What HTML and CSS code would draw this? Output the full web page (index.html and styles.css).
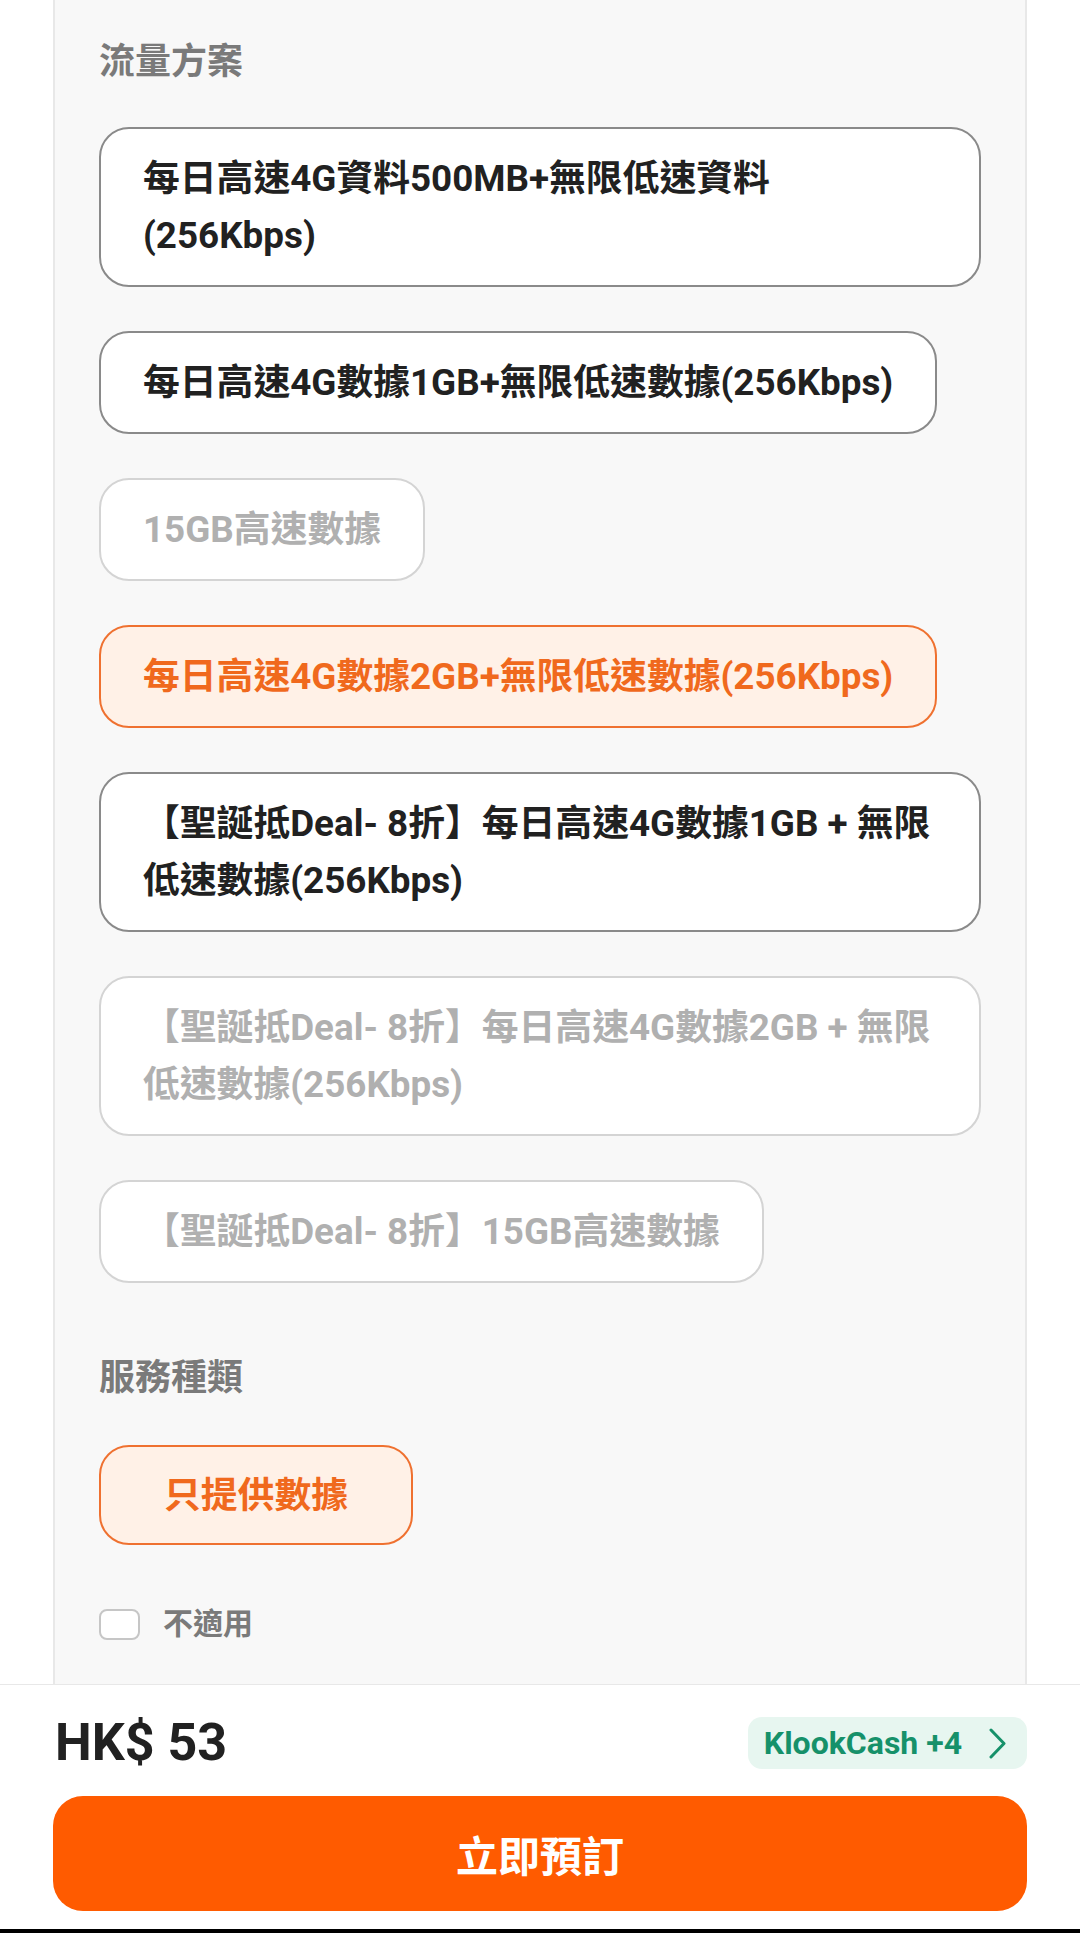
FILE: index.html
```html
<!DOCTYPE html>
<html lang="zh-Hant">
<head>
  <meta charset="UTF-8" />
  <meta name="viewport" content="width=device-width, initial-scale=1.0"/>
  <title>選擇方案</title>
  <link rel="stylesheet" href="styles.css">
</head>
<body>
  <div class="panel">
    <section class="group">
      <h2>流量方案</h2>
      <div class="options">
        <button class="option">每日高速4G資料500MB+無限低速資料(256Kbps)</button>
        <button class="option">每日高速4G數據1GB+無限低速數據(256Kbps)</button>
        <button class="option disabled">15GB高速數據</button>
        <button class="option selected">每日高速4G數據2GB+無限低速數據(256Kbps)</button>
        <button class="option">【聖誕抵Deal- 8折】每日高速4G數據1GB + 無限低速數據(256Kbps)</button>
        <button class="option disabled">【聖誕抵Deal- 8折】每日高速4G數據2GB + 無限低速數據(256Kbps)</button>
        <button class="option disabled">【聖誕抵Deal- 8折】15GB高速數據</button>
      </div>
    </section>

    <section class="group service">
      <h2>服務種類</h2>
      <div class="options">
        <button class="option selected wide">只提供數據</button>
      </div>
      <label class="check">
        <span class="box"></span>
        不適用
      </label>
    </section>
  </div>

  <footer>
    <div class="price-row">
      <div class="price">HK$ 53</div>
      <a class="cash" href="#">
        KlookCash +4
        <svg width="19" height="31" viewBox="0 0 19 31"><polyline points="3,2 16,15.5 3,29" fill="none" stroke="#16916a" stroke-width="3" stroke-linecap="round" stroke-linejoin="round"/></svg>
      </a>
    </div>
    <button class="book">立即預訂</button>
  </footer>
  <div class="nav-bar"></div>
</body>
</html>
```

FILE: styles.css
```css
* {
  box-sizing: border-box;
}
body {
  margin: 0;
  background: #fff;
  font-family: Roboto, "Noto Sans CJK TC", sans-serif;
  color: #212121;
}

.panel {
  margin: 0 53px;
  height: 1684px;
  background: #f8f8f8;
  border-left: 2px solid #e8e8e8;
  border-right: 2px solid #e8e8e8;
  padding: 36px 44px 0;
}

.group h2 {
  margin: 0 0 39px;
  font-size: 36px;
  line-height: 52px;
  font-weight: 700;
  color: #7a7a7a;
}

.service {
  margin-top: 69px;
}
.service h2 {
  margin-bottom: 41px;
}

.options {
  display: flex;
  flex-direction: column;
  align-items: flex-start;
  gap: 44px;
}

.option {
  font-family: inherit;
  font-size: 36.8px;
  font-weight: 700;
  line-height: 57px;
  text-align: left;
  color: #212121;
  background: #fff;
  border: 2px solid #8a8a8a;
  border-radius: 30px;
  padding: 21px 42px;
  max-width: 100%;
}
.option.disabled {
  color: #b0b0b0;
  border-color: #d4d4d4;
}
.option.selected {
  color: #f0691d;
  background: #fff1e7;
  border-color: #ef7130;
}
.option.wide {
  padding: 20px 63px 19px;
}

.check {
  display: flex;
  align-items: center;
  gap: 23px;
  margin-top: 53px;
  font-size: 30px;
  line-height: 52px;
  font-weight: 700;
  color: #7a7a7a;
}
.check .box {
  width: 41px;
  height: 31px;
  background: #fff;
  border: 2px solid #c6c6c6;
  border-radius: 8px;
}

footer {
  border-top: 1px solid #e8e8e8;
  padding: 32px 53px 18px;
}
.price-row {
  display: flex;
  justify-content: space-between;
  align-items: center;
}
.price {
  font-size: 52px;
  line-height: 52px;
  font-weight: 700;
  color: #212121;
  padding-left: 2px;
}
.cash {
  display: flex;
  align-items: center;
  gap: 26px;
  height: 52px;
  padding: 0 20px 0 16px;
  background: #e7f6f0;
  border-radius: 14px;
  color: #16916a;
  font-size: 32px;
  font-weight: 700;
  text-decoration: none;
}

.book {
  display: block;
  width: 100%;
  height: 115px;
  margin-top: 27px;
  border: none;
  border-radius: 30px;
  background: #ff5b00;
  color: #fff;
  font-family: inherit;
  font-size: 42px;
  font-weight: 700;
}

.nav-bar {
  height: 4px;
  background: #000;
}
```
